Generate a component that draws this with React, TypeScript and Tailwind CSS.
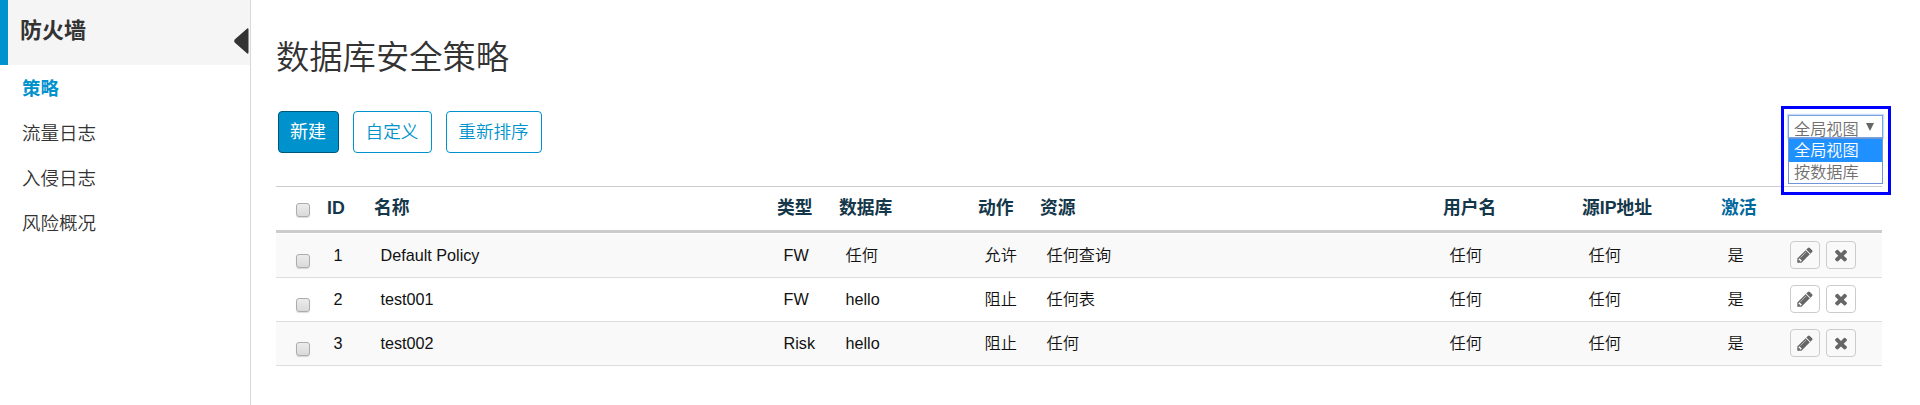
import type { ReactNode } from "react";

const COLS = "grid grid-cols-[51px_47px_403px_62px_139px_62px_403px_139px_139px_68px_93px]";

const menu = [
  { label: "策略", active: true },
  { label: "流量日志", active: false },
  { label: "入侵日志", active: false },
  { label: "风险概况", active: false },
];

const headers = ["ID", "名称", "类型", "数据库", "动作", "资源", "用户名", "源IP地址", "激活"];

const rows = [
  ["1", "Default Policy", "FW", "任何", "允许", "任何查询", "任何", "任何", "是"],
  ["2", "test001", "FW", "hello", "阻止", "任何表", "任何", "任何", "是"],
  ["3", "test002", "Risk", "hello", "阻止", "任何", "任何", "任何", "是"],
];

function Checkbox() {
  return (
    <span className="block size-[14px] rounded-[3px] border border-[#acacac] bg-gradient-to-b from-[#ececec] to-[#dadada] shadow-[0_1px_1px_rgba(0,0,0,0.14)]" />
  );
}

function IconButton({ label, children }: { label: string; children: ReactNode }) {
  return (
    <button
      type="button"
      aria-label={label}
      className="flex h-7 w-[30px] items-center justify-center rounded-[4px] border border-[#ccc] text-[#666]"
    >
      {children}
    </button>
  );
}

function Pencil() {
  return (
    <svg viewBox="0 0 1792 1792" className="size-[18px]" fill="currentColor">
      <path d="M491 1536l91-91-235-235-91 91v107h128v128h107zM1014 608q0-22-22-22-10 0-17 7l-542 542q-7 7-7 17 0 22 22 22 10 0 17-7l542-542q7-7 7-17zM960 416l416 416-832 832h-416v-416zM1643 512q0 53-37 90l-166 166-416-416 166-165q36-38 90-38 53 0 91 38l235 234q37 39 37 91z" />
    </svg>
  );
}

function Cross() {
  return (
    <svg viewBox="0 0 1792 1792" className="size-[18px]" fill="currentColor">
      <path d="M1490 1322q0 40-28 68l-136 136q-28 28-68 28t-68-28l-294-294-294 294q-28 28-68 28t-68-28l-136-136q-28-28-28-68t28-68l294-294-294-294q-28-28-28-68t28-68l136-136q28-28 68-28t68 28l294 294 294-294q28-28 68-28t68 28l136 136q28 28 28 68t-28 68l-294 294 294 294q28 28 28 68z" />
    </svg>
  );
}

function Sidebar() {
  return (
    <aside className="w-[251px] shrink-0 border-r border-[#d8d8d8]">
      <div className="flex h-[65px] items-start justify-between border-l-8 border-[#0092cc] bg-[#f5f5f5] pl-3">
        <h2 className="mt-4 text-[22px] leading-[30px] font-bold text-[#333]">防火墙</h2>
        <svg className="mt-7 mr-px h-[26px] w-[15px]" viewBox="0 0 15 26" fill="#333">
          <path d="M13.2.4 .7 11.6q-1 1.4 0 2.8L13.2 25.6q1.3.6 1.3-1V1.4q0-1.6-1.3-1z" />
        </svg>
      </div>
      <nav className="flex flex-col pt-px">
        {menu.map((m) => (
          <a
            key={m.label}
            className={
              m.active
                ? "flex h-[45px] items-center pl-[22px] text-[18.4px] font-bold text-[#0092cc]"
                : "flex h-[45px] items-center pl-[22px] text-[18.5px] font-[350] text-[#333]"
            }
          >
            {m.label}
          </a>
        ))}
      </nav>
    </aside>
  );
}

function ViewSelect() {
  return (
    <div className="absolute top-[106px] left-[1781px] h-[89px] w-[110px] border-[3px] border-[#0000ff] pt-[6px] pl-1 text-[16.2px] font-[350] text-[#707070]">
      <div className="flex h-[23px] w-[95px] items-center justify-between border border-[#7aa2e0] pr-[8px] pl-[5px] shadow-[0_0_1px_1px_rgba(77,144,254,0.3)]">
        <span className="mt-1 leading-5">全局视图</span>
        <svg viewBox="0 0 8 8" className="size-2" fill="#666">
          <path d="M0 0h8L4 8z" />
        </svg>
      </div>
      <div className="h-[46px] w-[95px] border border-[#7094d8] bg-white">
        <div className="flex h-[23px] items-center bg-[#1e90ff] pl-[5px] text-white">全局视图</div>
        <div className="flex h-[21px] items-center pl-[5px]">按数据库</div>
      </div>
    </div>
  );
}

export default function App() {
  return (
    <div className="relative flex h-[405px] w-[1920px] overflow-hidden bg-white font-['Liberation_Sans','Noto_Sans_CJK_SC',sans-serif]">
      <Sidebar />
      <main className="w-[1631px] pl-[25px]">
        <h1 className="mt-8 h-[79px] text-[33.3px] leading-[52px] font-[350] text-[#333]">数据库安全策略</h1>
        <div className="flex h-[75px] items-start gap-[14px] pl-[2px] text-[17.6px] font-[350] text-[#0092cc]">
          <button type="button" className="h-[42px] w-[61px] rounded-[4px] border border-[#00567a] bg-[#0092cc] pr-px text-[18px] font-normal text-white">新建</button>
          <button type="button" className="h-[42px] w-[79px] rounded-[4px] border border-[#0092cc] pr-px">自定义</button>
          <button type="button" className="h-[42px] w-24 rounded-[4px] border border-[#0092cc] pr-px">重新排序</button>
        </div>
        <div className="w-[1606px]">
          <div className={`${COLS} mb-px h-[47px] border-t border-b-[3px] border-[#ccc] text-[17.8px] font-bold text-[#14374a]`}>
            <div className="pt-4 pl-5">
              <Checkbox />
            </div>
            {headers.map((h) => (
              <div key={h} className={h === "激活" ? "pt-[7px] leading-7 whitespace-nowrap text-[#00689d]" : "pt-[7px] leading-7 whitespace-nowrap"}>
                {h}
              </div>
            ))}
          </div>
          {rows.map((r) => (
            <div key={r[0]} className={`${COLS} h-11 border-b border-[#ddd] text-[16.2px] font-[350] text-[#111] odd:bg-white even:bg-[#f9f9f9]`}>
              <div className="pt-5 pl-5">
                <Checkbox />
              </div>
              {r.map((c, i) => (
                <div key={i} className="pt-[7px] pl-[6.5px] leading-7 whitespace-nowrap">
                  {c}
                </div>
              ))}
              <div className="flex gap-[6px] pt-[7px] pl-px">
                <IconButton label="编辑"><Pencil /></IconButton>
                <IconButton label="删除"><Cross /></IconButton>
              </div>
            </div>
          ))}
        </div>
      </main>
      <ViewSelect />
    </div>
  );
}
